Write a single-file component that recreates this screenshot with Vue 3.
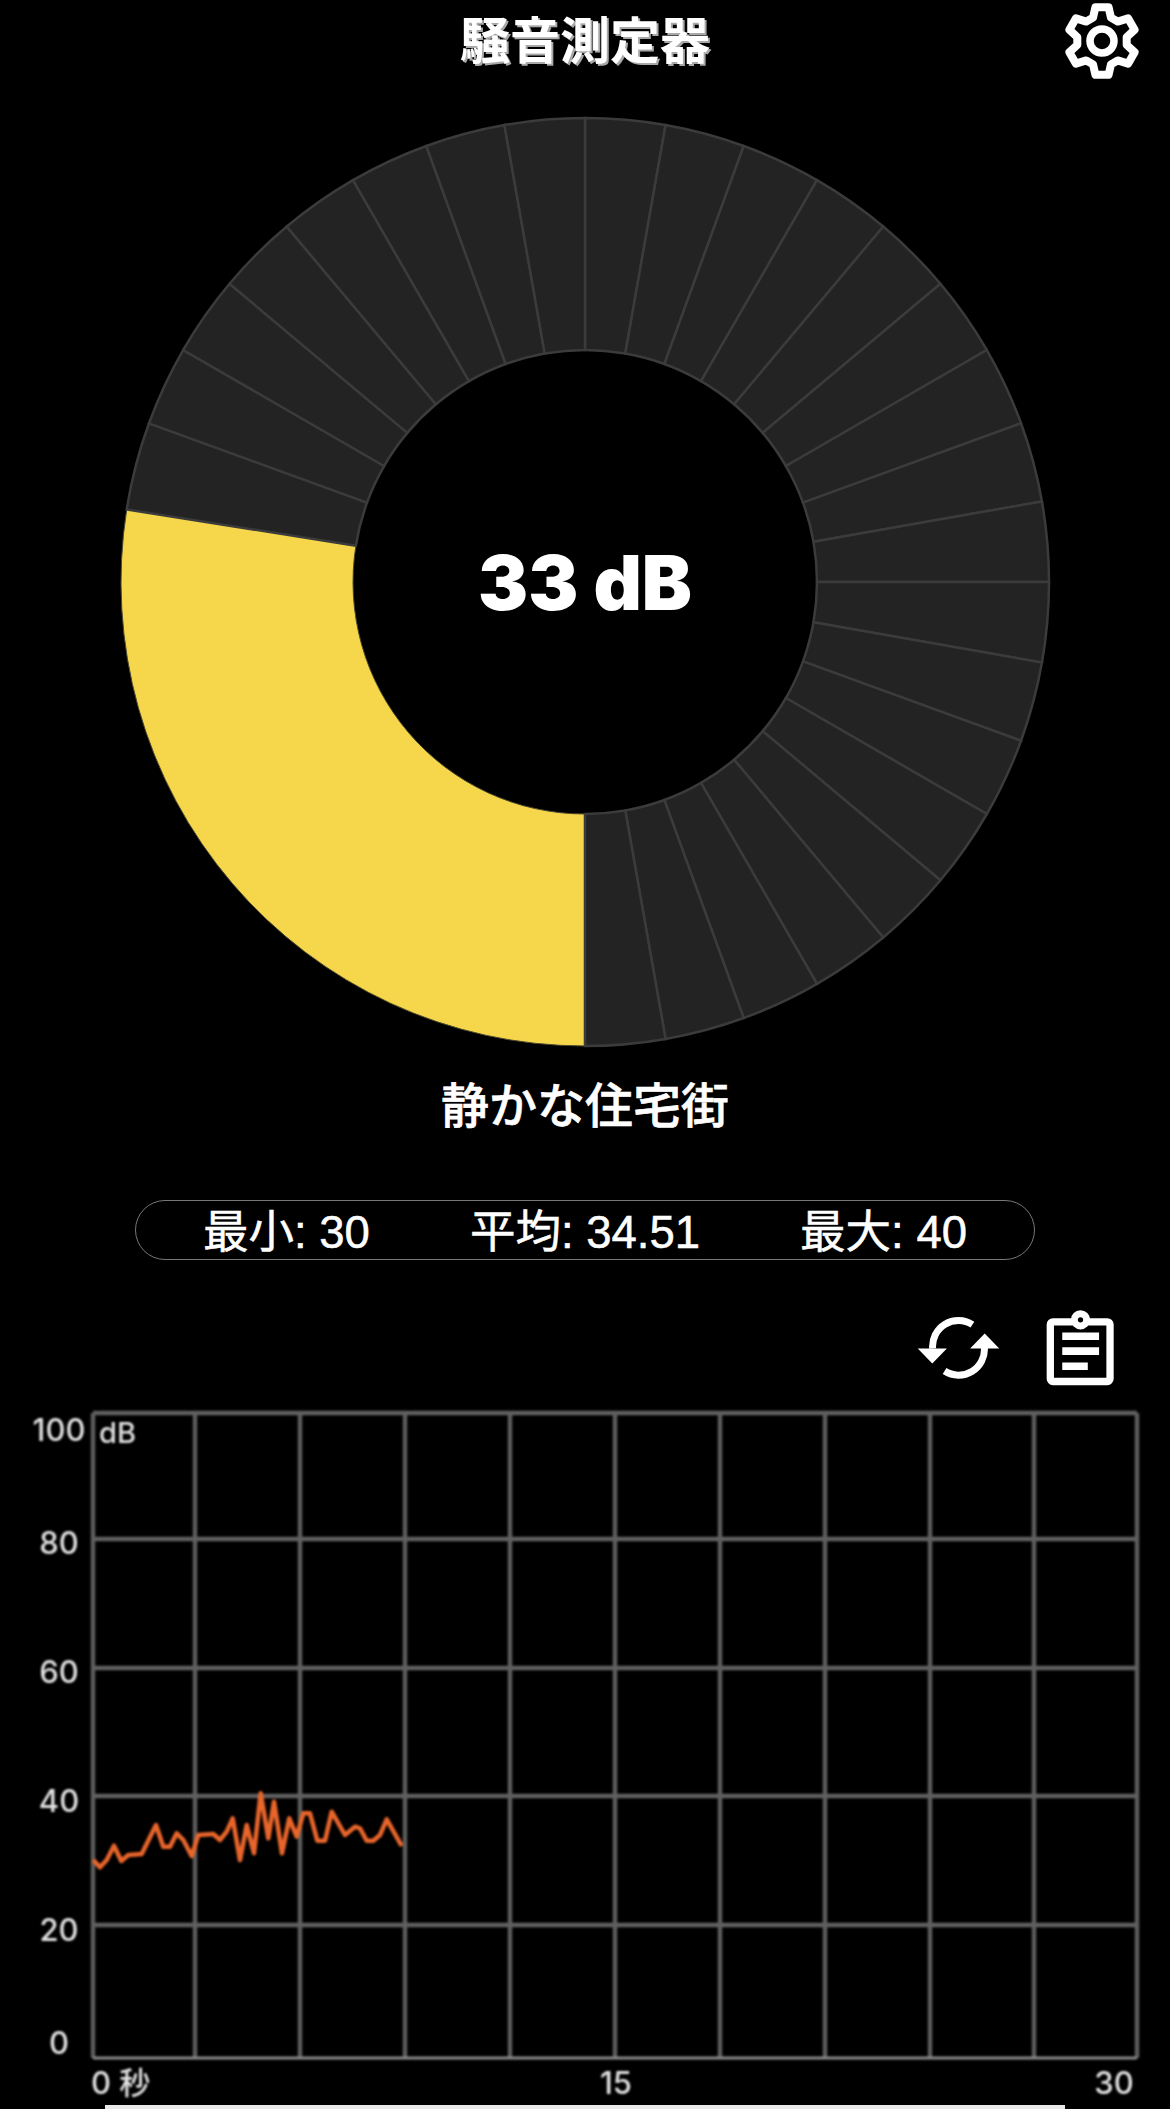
<template>
  <div class="page">
    <header class="top-bar">
      <div></div>
      <h1 class="title">騒音測定器</h1>
      <button class="gear-btn">
        <svg width="80" height="80" viewBox="0 0 80 80">
          <path :d="gearPath" fill="none" stroke="#fff" stroke-width="8" stroke-linejoin="round" />
          <circle cx="40" cy="40" r="12" fill="none" stroke="#fff" stroke-width="7.5" />
        </svg>
      </button>
    </header>

    <div class="gauge">
      <svg width="940" height="940" viewBox="-470 -470 940 940">
        <path :d="yellowPath" fill="#f6d64a" stroke="#4d4a30" stroke-width="1" />
        <path v-for="(d, i) in darkSegments" :key="i" :d="d" fill="#232323" stroke="#3b3b3b" stroke-width="2.5" />
      </svg>
      <div class="gauge-value">33 dB</div>
    </div>

    <div class="level-name">静かな住宅街</div>

    <div class="stats">
      <span>最小: 30</span>
      <span>平均: 34.51</span>
      <span>最大: 40</span>
    </div>

    <div class="tools">
      <svg width="87" height="63" viewBox="50 85 260 190">
        <path d="M222 108A78 78 0 0 0 102 180M138 248A78 78 0 0 0 258 176" fill="none" stroke="#fff" stroke-width="21" />
        <path d="M57 180H145L101 225ZM215 180H303L259 135Z" fill="#fff" />
      </svg>
      <svg width="73" height="80" viewBox="430 50 220 240">
        <rect x="449" y="91" width="180" height="180" rx="8" fill="none" stroke="#fff" stroke-width="22" />
        <circle cx="540" cy="85" r="29" fill="#fff" />
        <circle cx="540" cy="85" r="8" fill="#000" />
        <path d="M485 123H596V146H485ZM485 168H596V191H485ZM485 214H562V236H485Z" fill="#fff" />
      </svg>
    </div>

    <svg class="chart" width="1170" height="715" viewBox="0 1394 1170 715">
      <line v-for="x in gridX" :key="x" :x1="x" y1="1413" :x2="x" y2="2058" stroke="#5c5c5c" stroke-width="4.5" />
      <line v-for="y in gridY" :key="y" x1="93" :y1="y" x2="1137" :y2="y" stroke="#606060" stroke-width="4.5" />
      <line x1="93" y1="2058" x2="1137" y2="2058" stroke="#8a8a8a" stroke-width="3" />
      <polyline :points="linePoints" fill="none" stroke="#e8652b" stroke-width="4.5" stroke-linejoin="round" />
      <text v-for="l in yLabels" :key="l.text" class="axis" x="59" :y="l.y" text-anchor="middle">{{ l.text }}</text>
      <text class="axis small" x="99" y="1443">dB</text>
      <text class="axis" x="91" y="2094">0 秒</text>
      <text class="axis" x="616" y="2094" text-anchor="middle">15</text>
      <text class="axis" x="1114" y="2094" text-anchor="middle">30</text>
    </svg>

    <div class="home-bar"></div>
  </div>
</template>

<script setup>
const gridX = [93, 195, 300, 405, 510, 615, 720, 825, 930, 1034, 1137]
const gridY = [1413, 1539, 1668, 1796, 1925]
const yLabels = [
  { text: '100', y: 1441 },
  { text: '80', y: 1554 },
  { text: '60', y: 1683 },
  { text: '40', y: 1812 },
  { text: '20', y: 1941 },
  { text: '0', y: 2054 },
]

// 騒音の履歴 (zoom座標から変換)
const rawLine = [
  [40, 240], [60, 262], [80, 240], [102, 197], [124, 243], [145, 225], [185, 222], [228, 135],
  [250, 200], [270, 200], [290, 160], [310, 180], [335, 228], [355, 165], [400, 162], [420, 180],
  [440, 155], [458, 115], [480, 240], [500, 135], [522, 220], [542, 40], [565, 175], [582, 65],
  [606, 220], [628, 115], [650, 170], [670, 100], [690, 100], [712, 182], [735, 182], [755, 95],
  [795, 165], [825, 140], [840, 145], [860, 182], [880, 182], [900, 165], [920, 118], [965, 198],
]
const linePoints = rawLine.map(([x, y]) => `${(80 + x / 3).toFixed(1)},${(1780 + y / 3).toFixed(1)}`).join(' ')

const R = 464
const r = 232

function pt(radius, deg) {
  const a = (deg * Math.PI) / 180
  return `${(radius * Math.sin(a)).toFixed(2)} ${(-radius * Math.cos(a)).toFixed(2)}`
}

function arcPath(from, to) {
  const large = to - from > 180 ? 1 : 0
  return `M${pt(r, from)}L${pt(R, from)}A${R} ${R} 0 ${large} 1 ${pt(R, to)}L${pt(r, to)}A${r} ${r} 0 ${large} 0 ${pt(r, from)}Z`
}

const yellowPath = arcPath(180, 279)
const darkSegments = [arcPath(279, 290)]
for (let a = 0; a < 360; a += 10) {
  if (a >= 180 && a < 290) continue
  darkSegments.push(arcPath(a, a + 10))
}

// 歯車アイコン
function gear() {
  let d = ''
  for (let i = 0; i < 6; i++) {
    const t = i * 60
    const pts = [[25, t - 21], [34.5, t - 11], [34.5, t + 11], [25, t + 21]]
    for (const [rad, deg] of pts) {
      const a = (deg * Math.PI) / 180
      d += `${d ? 'L' : 'M'}${(40 + rad * Math.sin(a)).toFixed(2)} ${(40 - rad * Math.cos(a)).toFixed(2)}`
    }
  }
  return d + 'Z'
}
const gearPath = gear()
</script>

<style scoped>
.page {
  position: relative;
  width: 1170px;
  height: 2109px;
  overflow: hidden;
  background: #000;
  color: #fff;
  font-family: "Liberation Sans", "Noto Sans CJK JP", sans-serif;
}

.top-bar {
  height: 112px;
  display: grid;
  grid-template-columns: 1fr auto 1fr;
  align-items: start;
}

.title {
  margin: 11px 0 0;
  font-size: 50px;
  line-height: 62px;
  font-weight: 700;
  text-shadow: 2px 2px 0 #a8a8a8;
}

.gear-btn {
  justify-self: end;
  margin: 1px 28px 0 0;
  padding: 0;
  border: 0;
  background: none;
  line-height: 0;
}

.gauge {
  position: relative;
  width: 940px;
  height: 940px;
  margin: 0 auto;
  line-height: 0;
}

.gauge-value {
  position: absolute;
  inset: 0;
  display: flex;
  align-items: center;
  justify-content: center;
  font-family: Inter, "Liberation Sans", sans-serif;
  font-size: 75px;
  font-weight: 900;
  line-height: 1;
}

.level-name {
  margin-top: 22px;
  text-align: center;
  font-size: 48px;
  line-height: 66px;
  font-weight: 500;
  -webkit-text-stroke: 0.6px #fff;
}

.stats {
  box-sizing: border-box;
  width: 900px;
  height: 60px;
  margin: 60px auto 0;
  padding: 0 67px 4px;
  display: flex;
  justify-content: space-between;
  align-items: center;
  border: 1px solid #777;
  border-radius: 30px;
  font-size: 45.5px;
  font-weight: 400;
  -webkit-text-stroke: 0.5px #fff;
}

.tools {
  height: 80px;
  margin-top: 48px;
  padding-right: 53px;
  display: flex;
  justify-content: flex-end;
  align-items: center;
  gap: 42px;
}

.chart {
  display: block;
  margin-top: 6px;
  filter: blur(0.8px);
}

.axis {
  fill: #e2e2e2;
  font-family: Inter, "Noto Sans CJK JP", sans-serif;
  font-size: 31px;
  font-weight: 500;
}

.axis.small {
  font-size: 29px;
}

.home-bar {
  position: absolute;
  left: 105px;
  bottom: 0;
  width: 960px;
  height: 4px;
  background: #e8e8e8;
}
</style>
